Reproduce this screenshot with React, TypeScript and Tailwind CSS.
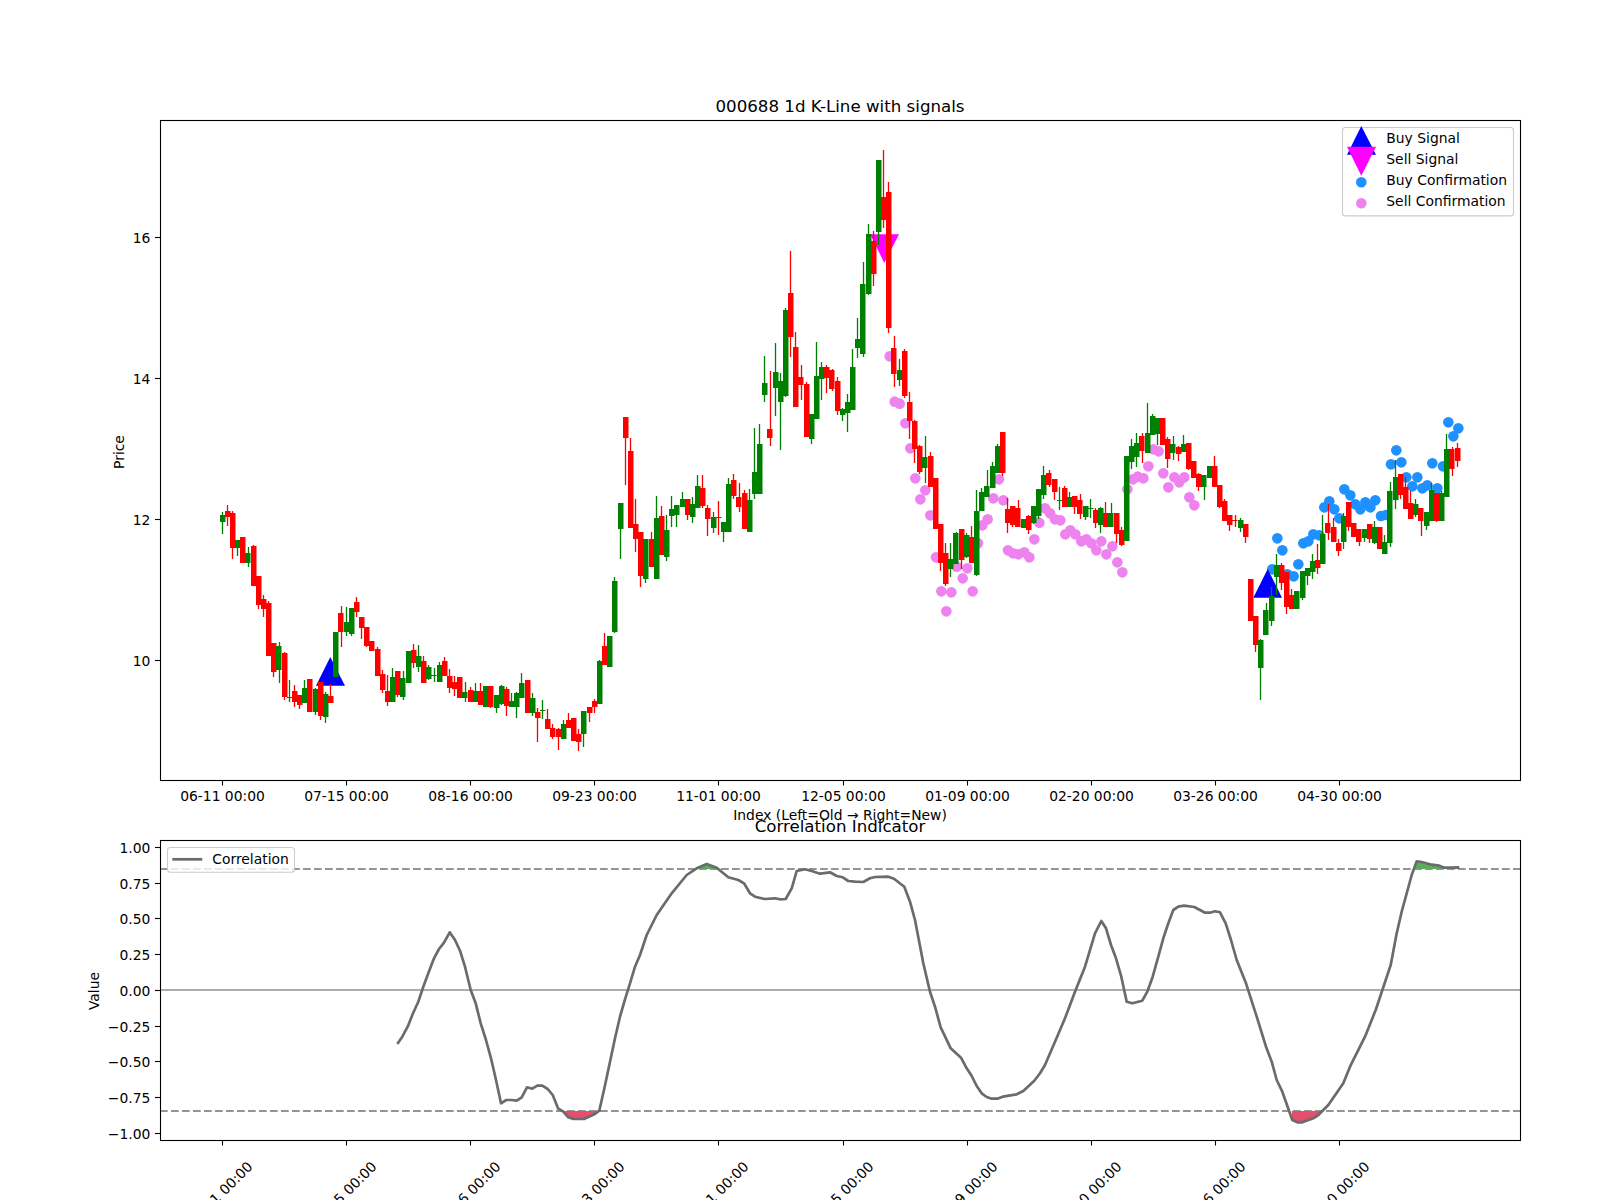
const S1 = `g 345 365 336 402,r 334 352 315 378,r 340 443 333 477,g 421 443 421 468,r 412 488 412 488,g 460 488 441 501,r 438 557 435 557,r 528 614 528 628,r 598 628 586 650,r 610 767 602 767,r 730 815 730 830,g 739 811 727 849,r 760 890 755 900,g 890 891 840 905,r 874 905 855 921,r 885 916 885 927,g 865 910 840 910,r 838 935 838 935,g 868 935 865 945,r 847 947 847 960,g 883 952 875 968,r 888 910 852 910,g 697 832 697 832,r 640 697 618 740,g 667 697 622 708,g 625 703 625 708,r 607 635 590 650,r 652 683 652 716,r 682 737 682 740,r 724 754 724 754,r 748 829 742 829,r 823 869 810 880,r 873 905 825 917,g 831 907 803 907,r 814 885 814 890,g 835 890 813 900,g 754 848 754 848,r 751 788 731 803,g 769 802 735 815,r 784 848 768 848,g 802 836 796 840,g 825 826 805 845,g 796 845 785 845,r 782 829 770 829,r 829 863 806 878,r 847 868 828 888,r 832 895 832 895,g 877 895 845 905,r 871 907 862 907,g 874 907 848 907,r 874 915 850 915,g 859 922 859 922,r 859 922 859 925,g 886 925 886 940,g 858 913 855 915,r 868 919 862 947,g 904 922 880 922,g 880 920 876 953,g 850 895 820 895,r 841 940 841 940,g 895 940 880 948,r 937 955 925 1025,g 930 931 900 957,r 958 988 928 988,r 983 1012 972 1016,r 988 1010 983 1050,g 972 1018 960 1018,r 961 983 938 983,r 955 1022 955 1022,r 1003 1025 988 1052,g 932 1003 932 1040,r 922 940 922 966,r 904 922 897 938,g 784 913 780 913,r 738 796 698 796,g 709 802 709 802,g 544 695 530 698,g 310 388 310 477,r 52 115 52 255,r 154 385 114 385,r 373 418 297 455,r 397 529 397 560,g 418 538 418 548,r 418 502 397 502,g 355 536 287 538,r 349 466 318 466,g 391 472 345 482,g 328 347 288 382,g 314 346 314 380,g 298 322 276 322,r 298 346 298 360,g 311 352 292 368,g 257 325 225 325,r 265 317 225 325,r 325 358 315 408,g 352 385 335 398,r 350 351 303 405,g 366 397 366 426,g 253 397 235 397,r 241 287 222 297,r 290 320 250 335,r 278 388 270 388,g 301 397 268 397,g 217 283 84 298,g 133 283 72 283`;
const S2 = `g 848 884 768 905,r 988 1015 813 1037,g 817 865 729 948,g 842 905 820 1050,g 631 887 625 890,r 580 712 453 770,r 742 920 697 920,r 832 854 795 900,r 853 1012 847 1012,g 941 1018 941 1032,g 827 958 726 958,g 802 838 786 900,r 802 833 795 878,r 811 866 806 873,r 844 932 832 945,g 928 946 925 963,g 905 940 882 997,g 800 929 748 929,g 718 743 655 775,g 553 761 487 770,g 403 581 372 585,r 424 523 393 558,g 181 397 181 435,r 290 360 150 383,r 277 685 247 698`;
const S3 = `r 145 221 108 260,g 211 239 177 258,r 154 288 148 293,r 307 362 277 417,r 364 448 361 490,r 438 515 434 522,g 472 505 408 550,r 469 561 457 561,r 535 688 535 688,r 672 790 672 812,r 760 852 728 858,g 778 806 728 830,g 700 792 695 792,r 688 780 688 808,g 706 770 698 775,r 712 790 678 790,g 632 824 570 828,g 577 632 565 632,g 559 590 510 590,g 497 563 487 563,g 438 518 432 518,r 397 518 397 528,r 628 668 595 700,r 619 676 619 682,r 625 680 600 682,g 658 683 658 683,r 648 690 645 703,g 619 668 619 672,g 568 648 568 658,g 526 586 497 598,r 520 556 510 560,r 538 575 538 600,g 600 601 562 630,r 564 620 558 620,g 591 620 575 620,r 589 620 589 642,r 601 642 582 658,g 619 652 619 660,g 625 626 597 655,r 631 668 625 683,g 625 676 622 698,r 640 680 605 682,g 640 680 608 680,r 640 703 640 728,r 691 735 682 738,g 469 722 469 722,g 438 485 418 508,g 430 470 398 500,r 409 452 398 490,g 400 460 308 460,g 349 404 341 404,g 355 402 355 435,r 355 436 355 436,r 418 478 410 503,g 433 460 408 480,r 442 463 437 482,g 433 455 405 455,r 430 508 430 510,r 484 534 484 534,r 522 562 520 573,g 526 562 526 600,g 499 535 499 535,r 499 560 468 560,r 556 622 556 625,r 604 664 598 664,r 646 674 646 692,r 660 661 645 682,g 661 685 655 695,r 673 712 673 728`;
const S4 = `r 598 722 598 722,r 707 795 707 815,g 781 863 778 960,g 691 764 670 764,g 649 722 622 738,g 556 592 522 645,r 556 608 548 630,r 577 680 577 702,r 645 686 628 686,g 634 686 634 686,g 572 654 572 660,g 565 587 565 615,g 544 575 522 597,r 541 563 492 582,g 462 551 405 551,r 430 460 372 480,r 442 485 413 485,r 490 512 478 528,g 408 485 400 507,r 366 442 366 452,r 428 470 428 472,r 448 485 448 498,g 448 473 448 485,r 433 478 433 490,g 442 488 422 492,r 442 506 442 506,g 487 521 465 521,g 334 490 305 500,g 292 361 240 387,r 282 345 282 357,r 322 388 292 388,r 370 416 333 416,g 373 405 357 412,r 384 423 384 468,g 397 437 397 450,g 331 424 310 424,r 340 422 340 426,g 340 422 333 422,g 208 352 162 352,r 208 266 200 288,r 205 242 189 262`;

type Candle = { x: number; red: boolean; bt: number; bb: number; wt: number; wb: number };

function parseCandles(): Candle[] {
  const out: Candle[] = [];
  const sections: [string, number][] = [
    [S1, 400],
    [S2, 100],
    [S3, 300],
    [S4, 380],
  ];
  for (const [text, off] of sections) {
    for (const row of text.split(",")) {
      const p = row.trim().split(" ");
      const i = out.length;
      out.push({
        x: 222.3 + 5.167 * i,
        red: p[0] === "r",
        bt: Math.round(off + Number(p[1]) / 3),
        bb: Math.round(off + Number(p[2]) / 3),
        wt: Math.round(off + Number(p[3]) / 3),
        wb: Math.round(off + Number(p[4]) / 3),
      });
    }
  }
  return out;
}

const SELL = [119,169,134,305,149,311,166,370,181,445,196,535,211,598,226,571,241,646,258,772,274,874,289,934,304,877,320,800,338,835,352,805,368,874,384,730,397,676,413,658,430,595,447,538,460,601,474,751,489,760,505,763,523,757,538,772,553,718,568,668,585,625,600,640,615,658,631,661,646,703,661,691,676,703,694,724,709,718,724,730,739,751,754,724,769,763,787,739,802,787,817,817,832,568,849,538,863,530,880,535,895,499,910,448,926,454,940,520,955,562,973,532,988,547,1003,532,1018,592,1033,616];
const BUY = [217,568,232,475,247,511,262,583,281,589,295,553,310,490,325,484,340,463,358,466,373,382,388,364,403,388,418,415,433,328,451,346,466,373,481,388,496,367,511,382,526,361,543,408,558,405,573,253,589,211,604,247,619,292,637,319,652,292,667,325,682,316,697,250,712,325,729,259,745,127,760,169,775,145];

const L7 = [772,762,787,740,803,710,818,672,835,635,850,590,865,550,882,505,897,477,912,458,929,427,945,450,960,482,975,530,992,600,1007,640,1022,700,1038,750,1053,805,1068,870,1083,940,1099,930,1115,930,1130,932,1145,922,1161,892,1177,896,1192,887,1207,887,1223,897,1238,915,1254,955,1270,965,1285,982,1300,987,1316,987,1332,987,1347,980,1363,973,1378,962,1394,890,1409,820,1425,745,1440,680,1456,625,1470,580,1485,530];
const L8 = [0,495,20,435,50,375,95,310,140,255,170,235,200,222,230,233,265,262,295,270,312,280,330,310,345,320,375,327,405,325,420,328,437,327,455,295,470,243,495,238,515,243,540,251,570,247,590,258,608,262,625,273,645,275,670,276,690,265,705,261,745,260,762,266,793,290,810,335,825,390,850,520,870,605,885,650,902,712,932,775,963,803,980,835,995,858,1010,888,1025,910,1040,921,1055,926,1072,926,1088,920,1130,913,1150,903,1183,872,1200,850,1215,825,1245,755,1275,685,1305,605,1335,530,1365,430];
const L9 = [4,393,18,415,33,465,48,505,64,560,80,635,97,640,127,632,142,605,158,560,175,500,190,445,205,400,220,360,235,350,252,347,283,351,300,360,315,368,330,368,345,364,360,367,377,400,393,450,410,510,438,580,470,680,498,770,515,815,530,870,547,905,577,990,592,997,607,997,640,985,655,975,685,945,730,880,750,830,795,740,827,660,872,525,890,430,905,365,920,310,935,255,950,214,965,216,995,224,1018,227,1033,233,1050,233,1078,232];

function conv(a: number[], xo: number): string[] {
  const r: string[] = [];
  for (let i = 0; i < a.length; i += 2) {
    r.push(`${(xo + a[i] / 3).toFixed(1)},${(790 + a[i + 1] / 3).toFixed(1)}`);
  }
  return r;
}

const LINE = [...conv(L7, 140), ...conv(L8, 640), ...conv(L9, 1100)].join(" ");
const RED1 = conv([1262,963,1270,965,1285,982,1300,987,1316,987,1332,987,1347,980,1363,973,1370,963], 140).join(" ");
const RED2 = conv([575,963,577,990,592,997,607,997,640,985,655,975,665,963], 1100).join(" ");
const GREEN1 = conv([172,237,200,222,230,233,234,237], 640).join(" ");
const GREEN2 = conv([945,237,950,214,965,216,995,224,1018,227,1033,233,1050,233,1078,232,1078,237], 1100).join(" ");

const TICKS = [
  [222.5, "06-11 00:00"],
  [346.5, "07-15 00:00"],
  [470.5, "08-16 00:00"],
  [594.5, "09-23 00:00"],
  [718.5, "11-01 00:00"],
  [843.5, "12-05 00:00"],
  [967.5, "01-09 00:00"],
  [1091.5, "02-20 00:00"],
  [1215.5, "03-26 00:00"],
  [1339.5, "04-30 00:00"],
] as const;

const PRICE = [
  [237.5, "16"],
  [378.5, "14"],
  [519.5, "12"],
  [660.5, "10"],
] as const;

const VALUES = ["1.00", "0.75", "0.50", "0.25", "0.00", "−0.25", "−0.50", "−0.75", "−1.00"];

function TopChart() {
  const candles = parseCandles();
  return (
    <svg viewBox="0 0 1600 800" width={1600} height={800} className="block shrink-0 overflow-visible">
      <text x={840} y={112} fontSize={16.67} textAnchor="middle">000688 1d K-Line with signals</text>

      {Array.from({ length: SELL.length / 2 }, (_, i) => (
        <circle key={i} cx={850 + SELL[i * 2] / 3} cy={300 + SELL[i * 2 + 1] / 3} r={5.3} fill="#ee82ee" />
      ))}
      {Array.from({ length: BUY.length / 2 }, (_, i) => (
        <circle key={i} cx={1200 + BUY[i * 2] / 3} cy={380 + BUY[i * 2 + 1] / 3} r={5.3} fill="#1e90ff" />
      ))}
      <polygon points="330.3,657 316,685.7 345,685.7" fill="#0000ff" />
      <polygon points="1267.7,569 1253.3,597.7 1282,597.7" fill="#0000ff" />
      <polygon points="870.3,234.3 899,234.3 884.3,263" fill="#ff00ff" />

      {candles.map((c, i) => {
        const col = c.red ? "#ff0000" : "#008000";
        return (
          <g key={i}>
            <rect x={Math.floor(c.x) - 0.15} y={c.wt} width={1.3} height={Math.max(c.wb - c.wt, 1)} fill={col} />
            <rect x={Math.round(c.x - 2.65)} y={c.bt} width={5.5} height={Math.max(c.bb - c.bt, 1)} fill={col} />
          </g>
        );
      })}

      <rect x={160.5} y={120.5} width={1360} height={660} fill="none" stroke="#000" strokeWidth={1.1} />
      {TICKS.map(([x, t]) => (
        <g key={t}>
          <line x1={x} x2={x} y1={780} y2={785.5} stroke="#000" strokeWidth={1.1} />
          <text x={x} y={801} fontSize={13.89} textAnchor="middle">{t}</text>
        </g>
      ))}
      {PRICE.map(([y, t]) => (
        <g key={t}>
          <line x1={155} x2={160.5} y1={y} y2={y} stroke="#000" strokeWidth={1.1} />
          <text x={150.3} y={y + 5.3} fontSize={13.89} textAnchor="end">{t}</text>
        </g>
      ))}
      <text transform="rotate(-90 124 452)" x={124} y={452} fontSize={13.89} textAnchor="middle">Price</text>

      <rect x={1342.5} y={127.5} width={171} height={88.4} rx={3} fill="#ffffff" fillOpacity={0.8} stroke="#cccccc" strokeWidth={1.1} />
      <polygon points="1361.3,126 1347,154.7 1376,154.7" fill="#0000ff" />
      <polygon points="1347,146.7 1376,146.7 1361.3,175.7" fill="#ff00ff" />
      <circle cx={1361.3} cy={182.3} r={5.3} fill="#1e90ff" />
      <circle cx={1361.3} cy={203.3} r={5.3} fill="#ee82ee" />
      <text x={1386.3} y={143.3} fontSize={13.89}>Buy Signal</text>
      <text x={1386.3} y={164.3} fontSize={13.89}>Sell Signal</text>
      <text x={1386.3} y={185.3} fontSize={13.89}>Buy Confirmation</text>
      <text x={1386.3} y={206.3} fontSize={13.89}>Sell Confirmation</text>

      <text x={840} y={820} fontSize={13.89} textAnchor="middle">Index (Left=Old → Right=New)</text>
    </svg>
  );
}

function BottomChart() {
  return (
    <svg viewBox="0 800 1600 400" width={1600} height={400} className="block shrink-0">
      <text x={840} y={831.7} fontSize={16.67} textAnchor="middle">Correlation Indicator</text>

      <line x1={160} x2={1520} y1={990} y2={990} stroke="#adadad" strokeWidth={2.08} />
      <line x1={160} x2={1520} y1={869} y2={869} stroke="#949494" strokeWidth={2.08} strokeDasharray="7.7 3.3" />
      <line x1={160} x2={1520} y1={1111} y2={1111} stroke="#949494" strokeWidth={2.08} strokeDasharray="7.7 3.3" />
      <polygon points={RED1} fill="#e54f6d" />
      <polygon points={RED2} fill="#e54f6d" />
      <polygon points={GREEN1} fill="#5aad5a" />
      <polygon points={GREEN2} fill="#5aad5a" />
      <polyline points={LINE} fill="none" stroke="#6b6b6b" strokeWidth={2.7} strokeLinejoin="round" />

      <rect x={160.5} y={840.5} width={1360} height={300} fill="none" stroke="#000" strokeWidth={1.1} />
      {TICKS.map(([x, t]) => (
        <g key={t}>
          <line x1={x} x2={x} y1={1140} y2={1145.5} stroke="#000" strokeWidth={1.1} />
          <text transform={`rotate(-45 ${x + 1} 1197.5)`} x={x + 1} y={1197.5} fontSize={13.89} textAnchor="middle">{t}</text>
        </g>
      ))}
      {VALUES.map((t, i) => {
        const y = Math.floor(847.3 + i * 35.75) + 0.5;
        return (
          <g key={t}>
            <line x1={155} x2={160.5} y1={y} y2={y} stroke="#000" strokeWidth={1.1} />
            <text x={150.3} y={y + 5.3} fontSize={13.89} textAnchor="end">{t}</text>
          </g>
        );
      })}
      <text transform="rotate(-90 99 991)" x={99} y={991} fontSize={13.89} textAnchor="middle">Value</text>

      <rect x={167.5} y={847.5} width={127} height={24.7} rx={3} fill="#ffffff" fillOpacity={0.8} stroke="#cccccc" strokeWidth={1.1} />
      <line x1={172.3} x2={202.3} y1={859.3} y2={859.3} stroke="#6b6b6b" strokeWidth={2.7} />
      <text x={212.3} y={864.3} fontSize={13.89}>Correlation</text>
    </svg>
  );
}

export default function App() {
  return (
    <div className="flex h-[1200px] w-[1600px] flex-col overflow-hidden bg-white font-['DejaVu_Sans',sans-serif] text-black">
      <TopChart />
      <BottomChart />
    </div>
  );
}
